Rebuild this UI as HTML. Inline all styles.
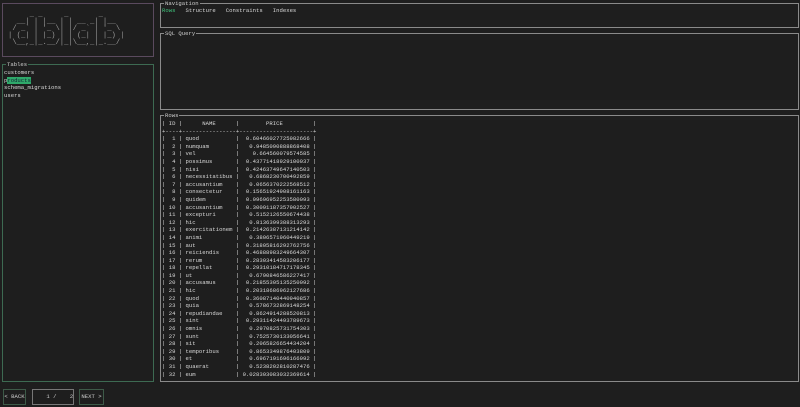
<!DOCTYPE html>
<html><head><meta charset="utf-8"><style>
*{margin:0;padding:0;box-sizing:border-box}
body{width:800px;height:407px;background:#1e1e1e;position:relative;overflow:hidden;font-family:"Liberation Mono",monospace;font-size:5.6px;line-height:7.6px;color:#d8d8d8}
.box{position:absolute;border:1px solid #8a8a8a}
.t{position:absolute;top:-4px;left:3px;background:#1e1e1e;padding:0 1px;color:#ccc;line-height:7px}
pre{font-family:inherit;margin:0;white-space:pre}
.btn{position:absolute;border:1px solid #3d5a48;color:#ccc;text-align:center;line-height:14px}
</style></head><body>
<div class="box" style="left:2px;top:3px;width:152px;height:54px;border-color:#5a4a5e"></div>
<pre style="position:absolute;left:8px;top:12px;font-size:7.2px;line-height:7px;color:#9a9a9a">     _ _     _       _
  __| | |__ | | __ _| |__
 / _` | '_ \| |/ _` | '_ \
| (_| | |_) | | (_| | |_) |
 \__,_|_.__/|_|\__,_|_.__/</pre>
<div class="box" style="left:2px;top:64px;width:152px;height:318px;border-color:#3d6a52"><span class="t">Tables</span>
<pre style="position:absolute;left:1px;top:4px">customers
p<span style="background:#2fa86a;color:#123">roducts</span>
schema_migrations
users</pre></div>
<div class="box" style="left:160px;top:3px;width:639px;height:25px"><span class="t">Navigation</span>
<pre style="position:absolute;left:1px;top:3px"><span style="color:#3fc07a">Rows</span>   Structure   Constraints   Indexes</pre></div>
<div class="box" style="left:160px;top:33px;width:639px;height:77px"><span class="t">SQL Query</span></div>
<div class="box" style="left:160px;top:115px;width:639px;height:267px"><span class="t">Rows</span>
<pre style="position:absolute;left:1px;top:4px">| ID |      NAME      |        PRICE         |
+----+----------------+----------------------+
|  1 | quod           |  0.60466027725982666 |
|  2 | numquam        |   0.9485090888868408 |
|  3 | vel            |    0.664560079574585 |
|  4 | possimus       |  0.43771418929100037 |
|  5 | nisi           |  0.42463749647140503 |
|  6 | necessitatibus |   0.6868230700492859 |
|  7 | accusantium    |   0.0656370222568512 |
|  8 | consectetur    |  0.15651924908161163 |
|  9 | quidem         |  0.09696952253580093 |
| 10 | accusantium    |  0.30091187357902527 |
| 11 | excepturi      |   0.5152126550674438 |
| 12 | hic            |   0.8136399388313293 |
| 13 | exercitationem |  0.21426387131214142 |
| 14 | animi          |   0.3806571960449219 |
| 15 | aut            |  0.31805816292762756 |
| 16 | reiciendis     |  0.46888983249664307 |
| 17 | rerum          |  0.28303414583206177 |
| 18 | repellat       |  0.29310184717178345 |
| 19 | ut             |   0.6790846586227417 |
| 20 | accusamus      |  0.21855305135250092 |
| 21 | hic            |  0.20318686962127686 |
| 22 | quod           |  0.36087140440940857 |
| 23 | quia           |   0.5786732869148254 |
| 24 | repudiandae    |   0.8624914288520813 |
| 25 | sint           |  0.29311424493789673 |
| 26 | omnis          |   0.2970825731754303 |
| 27 | sunt           |   0.7525730133056641 |
| 28 | sit            |   0.2065826654434204 |
| 29 | temporibus     |   0.8653349876403809 |
| 30 | et             |   0.6967191696166992 |
| 31 | quaerat        |   0.5238202810287476 |
| 32 | eum            | 0.028303083032369614 |</pre></div>
<div class="btn" style="left:3px;top:389px;width:23px;height:16px">&lt; BACK</div>
<div class="btn" style="left:32px;top:389px;width:42px;height:16px;border-color:#777"><pre style="line-height:14px">    1 /    2</pre></div>
<div class="btn" style="left:79px;top:389px;width:25px;height:16px">NEXT &gt;</div>
</body></html>
